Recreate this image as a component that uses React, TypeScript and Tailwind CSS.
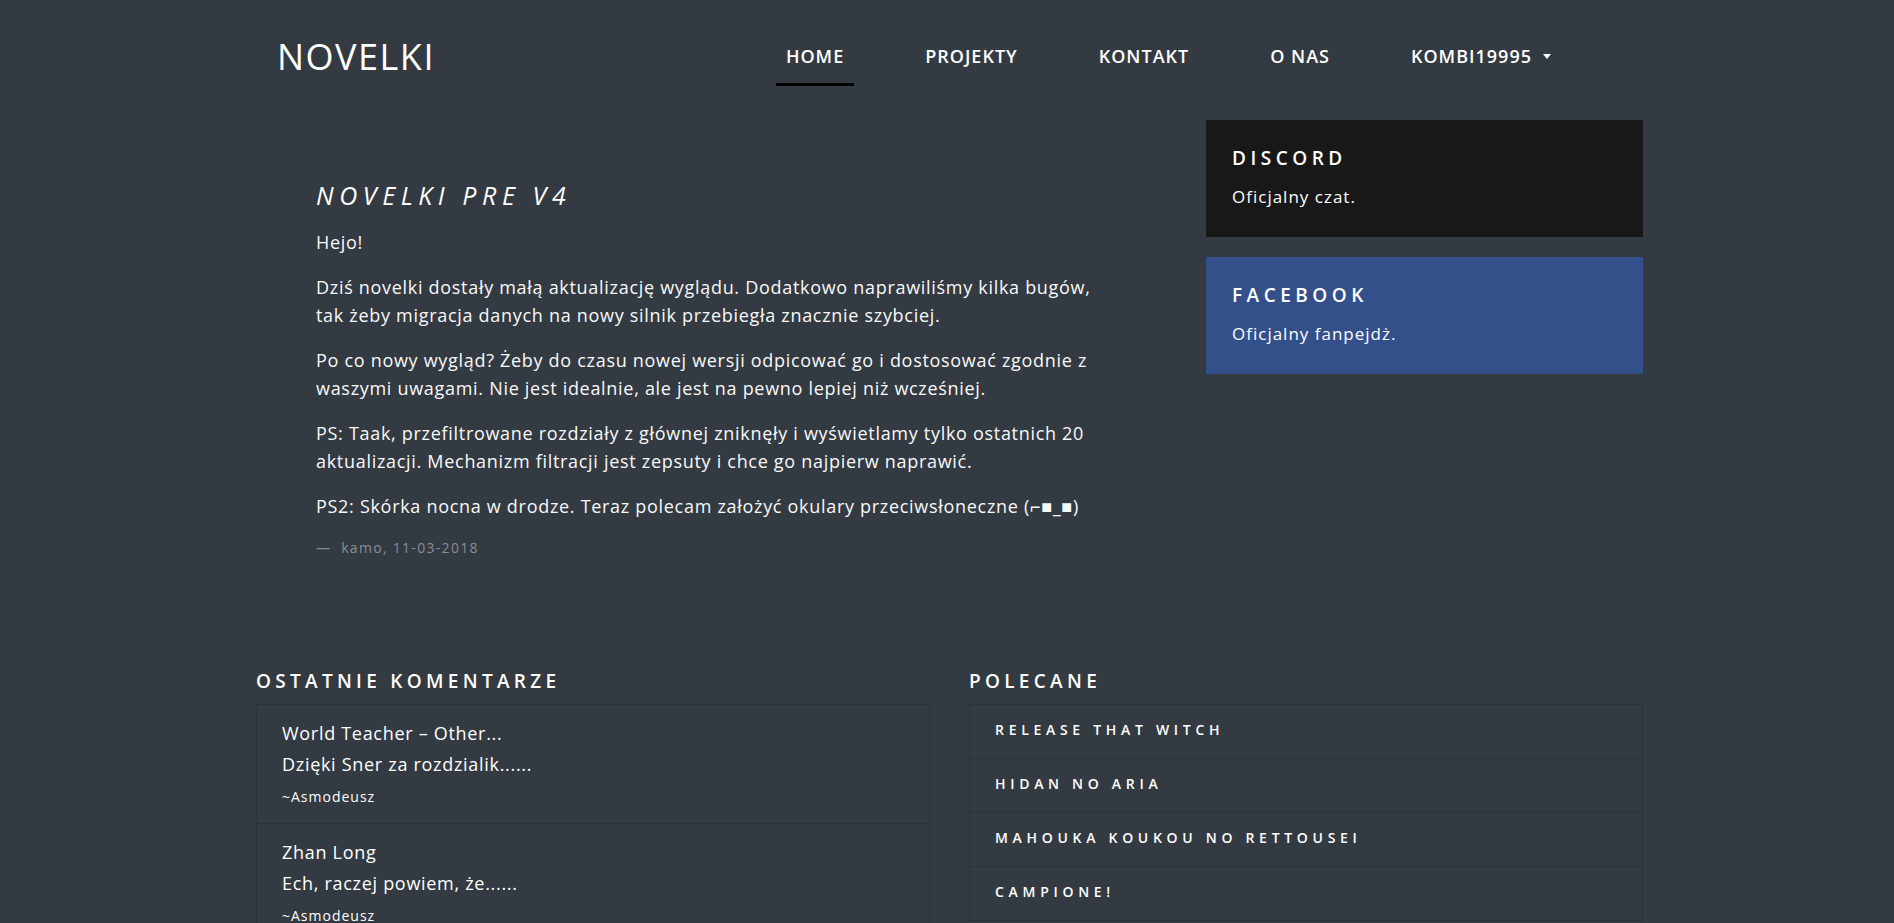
import React from "react";

const font = { fontFamily: '"Open Sans", "Noto Sans", sans-serif' };

const comments = [
  { title: "World Teacher – Other...", text: "Dzięki Sner za rozdzialik......", author: "~Asmodeusz" },
  { title: "Zhan Long", text: "Ech, raczej powiem, że......", author: "~Asmodeusz" },
  { title: "Release That Witch", text: "Dzięki za rozdział......", author: "~Asmodeusz" },
];

const polecane = ["RELEASE THAT WITCH", "HIDAN NO ARIA", "MAHOUKA KOUKOU NO RETTOUSEI", "CAMPIONE!"];

export default function App() {
  return (
    <div className="min-h-screen bg-[#343a41] text-white pl-[5px]" style={font}>
      <div className="w-[1387px] mx-auto">
        {/* Header */}
        <header className="flex items-start h-[100px]">
          <div className="ml-[21px] mt-[33px] text-[36px] leading-[48px] font-normal tracking-[1.5px]">NOVELKI</div>
          <nav className="ml-auto mr-[82px] flex gap-[61px]">
            {["HOME", "PROJEKTY", "KONTAKT", "O NAS"].map((n, i) => (
              <a
                key={n}
                className={`block px-[10px] pt-[43px] pb-[14px] leading-[26px] text-[18px] font-semibold tracking-[1px] border-b-[3px] ${
                  i === 0 ? "border-black" : "border-transparent"
                }`}
              >
                {n}
              </a>
            ))}
            <a className="flex items-center px-[10px] pt-[43px] pb-[14px] leading-[26px] text-[18px] font-semibold tracking-[1px] border-b-[3px] border-transparent">
              KOMBI19995
              <span className="ml-[11px] inline-block w-0 h-0 border-t-[5px] border-t-white border-x-[4px] border-x-transparent" />
            </a>
          </nav>
        </header>

        {/* Main */}
        <div className="flex mt-[20px]">
          <article className="w-[925px] px-[60px] pt-[59px]">
            <h1 className="text-[25px] leading-[32px] italic font-medium tracking-[5.6px] mb-[17px]">NOVELKI PRE V4</h1>
            <div className="text-[18px] leading-[28px] tracking-[0.7px] text-[#f8f9fa]">
              <p className="mb-[17px]">Hejo!</p>
              <p className="mb-[17px]">
                Dziś novelki dostały małą aktualizację wyglądu. Dodatkowo naprawiliśmy kilka bugów, tak żeby migracja
                danych na nowy silnik przebiegła znacznie szybciej.
              </p>
              <p className="mb-[17px]">
                Po co nowy wygląd? Żeby do czasu nowej wersji odpicować go i dostosować zgodnie z waszymi uwagami. Nie
                jest idealnie, ale jest na pewno lepiej niż wcześniej.
              </p>
              <p className="mb-[17px]">
                PS: Taak, przefiltrowane rozdziały z głównej zniknęły i wyświetlamy tylko ostatnich 20 aktualizacji.
                Mechanizm filtracji jest zepsuty i chce go najpierw naprawić.
              </p>
              <p className="mb-[17px]">
                PS2: Skórka nocna w drodze. Teraz polecam założyć okulary przeciwsłoneczne (⌐■_■)
              </p>
            </div>
            <div className="text-[14px] leading-[21px] tracking-[1.3px] text-[#868e96]">—&nbsp; kamo, 11-03-2018</div>
          </article>

          <aside className="flex-1 pl-[25px] flex flex-col gap-[20px]">
            <div className="bg-[#181818] h-[117px] px-[26px] pt-[25px]">
              <h3 className="text-[19px] leading-[26px] font-semibold tracking-[4.5px]">DISCORD</h3>
              <p className="mt-[14px] text-[17px] leading-[24px] tracking-[1px]">Oficjalny czat.</p>
            </div>
            <div className="bg-[#34508a] h-[117px] px-[26px] pt-[25px]">
              <h3 className="text-[19px] leading-[26px] font-semibold tracking-[4.5px]">FACEBOOK</h3>
              <p className="mt-[14px] text-[17px] leading-[24px] tracking-[1px]">Oficjalny fanpejdż.</p>
            </div>
          </aside>
        </div>

        {/* Bottom */}
        <div className="grid grid-cols-2 gap-[39px] mt-[110px] pb-[40px]">
          <section>
            <h2 className="text-[19px] leading-[26px] font-semibold tracking-[4.3px] mb-[10px]">OSTATNIE KOMENTARZE</h2>
            <div className="border border-[#2d3238]">
              {comments.map((c, i) => (
                <div key={i} className={`px-[25px] pt-[14px] pb-[16px] ${i > 0 ? "border-t border-[#2d3238]" : ""}`}>
                  <div className="text-[18px] leading-[28px] tracking-[0.7px]">{c.title}</div>
                  <div className="mt-[3px] text-[18px] leading-[28px] tracking-[0.7px]">{c.text}</div>
                  <div className="mt-[8px] text-[14px] leading-[21px] tracking-[1px]">{c.author}</div>
                </div>
              ))}
            </div>
          </section>
          <section>
            <h2 className="text-[19px] leading-[26px] font-semibold tracking-[4.3px] mb-[10px]">POLECANE</h2>
            <div className="border border-[#2d3238]">
              {polecane.map((p, i) => (
                <div
                  key={p}
                  className={`px-[25px] pt-[14px] pb-[18px] text-[14px] leading-[21px] font-semibold tracking-[4.7px] ${
                    i > 0 ? "border-t border-[#2d3238]" : ""
                  }`}
                >
                  {p}
                </div>
              ))}
            </div>
          </section>
        </div>
      </div>
    </div>
  );
}
